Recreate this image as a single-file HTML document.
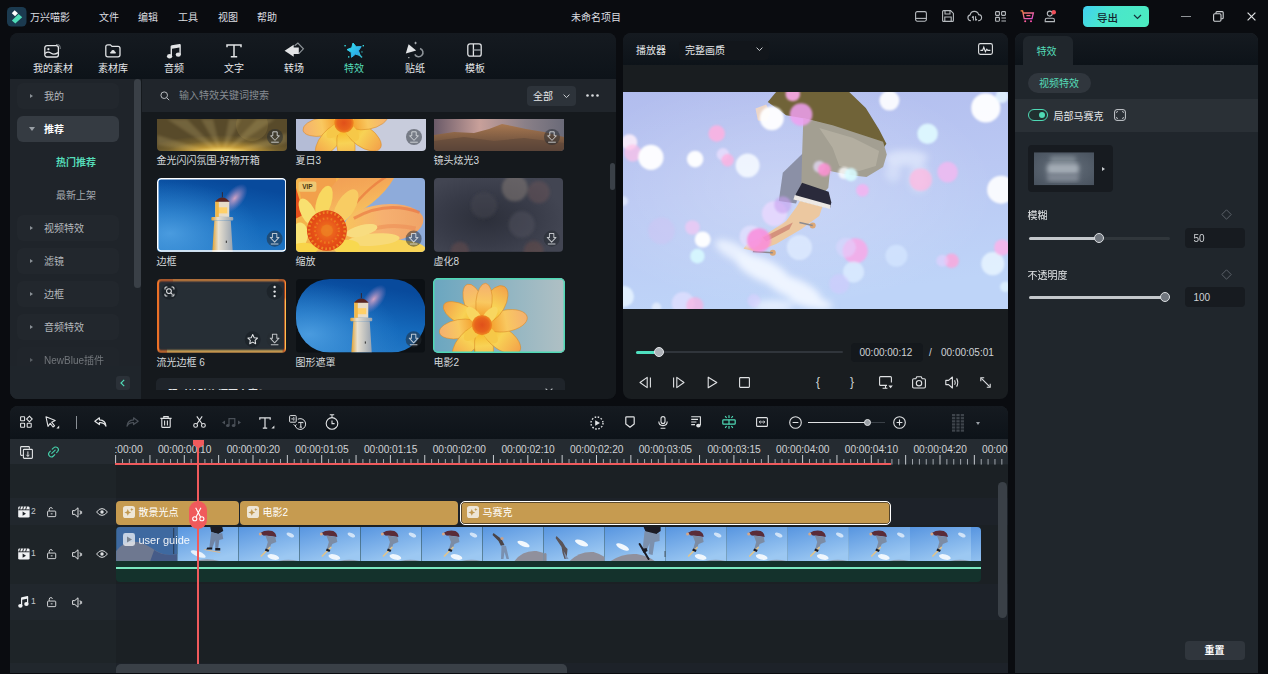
<!DOCTYPE html>
<html lang="zh-CN">
<head>
<meta charset="utf-8">
<title>万兴喵影</title>
<style>
*{box-sizing:border-box;margin:0;padding:0}
html,body{width:1268px;height:674px;overflow:hidden;background:#0a0c10;}
body{font-family:"Liberation Sans","Noto Sans CJK SC",sans-serif;font-size:10px;color:#d6d9dc;position:relative}
.abs{position:absolute}
.t{position:absolute;white-space:nowrap;line-height:14px;height:14px;margin-top:1px}
svg{position:absolute;overflow:visible}
/* ===== top bar ===== */
#topbar{position:absolute;left:0;top:0;width:1268px;height:33px;background:#0a0c10}
#topbar .t{top:9.5px;font-size:10px;color:#dcdee0}
/* ===== left panel ===== */
#lp{position:absolute;left:10px;top:33px;width:606px;height:365.5px;border-radius:8px;background:#15191d;overflow:hidden}
#lp-tabs{position:absolute;left:0;top:0;width:606px;height:46px;background:linear-gradient(#151a20,#0d1319);z-index:3}
#lp-tabs .t{top:28px;font-size:10px;color:#e4e6e8;text-align:center;width:60px}
#side{position:absolute;left:0;top:45px;width:131.300px;height:321px;background:#1f242a}
.sitem{position:absolute;left:7px;width:102px;height:26px;border-radius:6px;background:#22272d}
.sitem .t{left:27px;top:6px;font-size:10px;color:#b4b8bc}
.sitem i{position:absolute;left:13px;top:10.5px;border-left:3.5px solid #8a9096;border-top:2.5px solid transparent;border-bottom:2.5px solid transparent}
#content{position:absolute;left:132px;top:45px;width:474px;height:320px;background:#15191d}
#search{position:absolute;left:0;top:0;width:474px;height:34px;background:#20252b}
.thumb{position:absolute;border-radius:4px;overflow:hidden}
.cap{position:absolute;font-size:10px;color:#d6d9dc;white-space:nowrap;line-height:14px;margin-top:1px}
/* ===== preview ===== */
#pv{position:absolute;left:623px;top:33px;width:385px;height:365.5px;border-radius:8px;background:#191d20;overflow:hidden}
#pv-head{position:absolute;left:0;top:0;width:385px;height:32px;background:linear-gradient(#151a20,#0d1319)}
/* ===== right panel ===== */
#rp{position:absolute;left:1014.5px;top:33px;width:243.5px;height:639.6px;border-radius:8px 8px 0 0;background:#20262c;overflow:hidden}
#rp-head{position:absolute;left:0;top:0;width:244px;height:32px;background:linear-gradient(#151a20,#0d1319)}
/* ===== timeline ===== */
#tl{position:absolute;left:10px;top:406px;width:998px;height:266.6px;border-radius:8px 8px 0 0;background:#1e2428;overflow:hidden}
#tl-bar{position:absolute;left:0;top:0;width:998px;height:33px;background:linear-gradient(#151a20,#0d1319)}
.rl{top:36px;font-size:10.200px;color:#d0d3d6;letter-spacing:-.05px}
.clip{position:absolute;border-radius:4px;background:#c69b50}
</style>
</head>
<body>
<div id="topbar">
  <svg style="left:7px;top:7px" width="20" height="20" viewBox="0 0 20 20"><rect x="0" y="0" width="19.5" height="19.5" rx="4.5" fill="#1b3a4f"/><path d="M7.6 3.2 L11 6.3 L8 9.2 L4.8 6.2Z" fill="#fff"/><path d="M11.6 6.9 L15.2 10.2 L8.3 16.6 L4.9 13.4Z" fill="#4fdcb8"/></svg>
  <div class="t" style="left:30px">万兴喵影</div>
  <div class="t" style="left:99px">文件</div>
  <div class="t" style="left:138px">编辑</div>
  <div class="t" style="left:178px">工具</div>
  <div class="t" style="left:218px">视图</div>
  <div class="t" style="left:257px">帮助</div>
  <div class="t" style="left:571px">未命名项目</div>
  <!-- right icons -->
  <svg style="left:915px;top:11px" width="12" height="11" viewBox="0 0 12 11" fill="none" stroke="#b6babe" stroke-width="1.1"><rect x="0.6" y="0.6" width="10.8" height="9.6" rx="1.6"/><path d="M0.6 7.4H11.4"/></svg>
  <svg style="left:942px;top:10px" width="12" height="12" viewBox="0 0 12 12" fill="none" stroke="#b6babe" stroke-width="1.1"><path d="M0.6 1.6Q0.6 0.6 1.6 0.6H8.6L11.4 3.4V10.4Q11.4 11.4 10.4 11.4H1.6Q0.6 11.4 0.6 10.4Z"/><path d="M3 0.8V4H8V0.8M2.8 11.2V7H9.2V11.2"/></svg>
  <svg style="left:967px;top:10px" width="15" height="12" viewBox="0 0 15 12" fill="none" stroke="#b6babe" stroke-width="1.1"><path d="M4 10.8H3.6A3 3 0 0 1 3.2 4.9A4.3 4.3 0 0 1 11.6 4.6A3.1 3.1 0 0 1 11.4 10.8H11"/><path d="M6.4 6.2V10.6M5 7.6L6.4 6.2M8.6 10.6V6.2M10 9.2L8.6 10.6"/></svg>
  <svg style="left:995px;top:11px" width="12" height="11" viewBox="0 0 12 11" fill="none" stroke="#b6babe" stroke-width="1.1"><rect x="0.6" y="0.6" width="3.8" height="3.8" rx="0.6"/><rect x="6.6" y="0.6" width="3.8" height="3.8" rx="0.6"/><rect x="0.6" y="6.4" width="3.8" height="3.8" rx="0.6"/><path d="M6.4 7H11M6.4 10H11"/></svg>
  <svg style="left:1020px;top:10px" width="15" height="13" viewBox="0 0 15 13" fill="none" stroke-width="1.3"><defs><linearGradient id="cg" x1="0" y1="0" x2="1" y2="1"><stop offset="0" stop-color="#ff8a3c"/><stop offset="1" stop-color="#e050d8"/></linearGradient></defs><path d="M0.6 0.8H2.6L4.2 8.6H12L13.4 3H3.2" stroke="url(#cg)"/><path d="M6.4 5.6H10.4" stroke="#ff6a80"/><circle cx="5.2" cy="11.3" r="1" fill="#ff5fa0" stroke="none"/><circle cx="11" cy="11.3" r="1" fill="#ff4fb0" stroke="none"/></svg>
  <svg style="left:1044px;top:10px" width="13" height="13" viewBox="0 0 13 13" fill="none" stroke="#b6babe" stroke-width="1.1"><circle cx="5.8" cy="3.6" r="2.5"/><path d="M1.2 11.6V10Q1.2 8.2 3 8.2H8.6Q10.4 8.2 10.4 10V11.6Z"/><circle cx="9.8" cy="2.2" r="2.2" fill="#f0505a" stroke="none"/></svg>
  <div class="abs" style="left:1083px;top:6.400px;width:66px;height:20.200px;border-radius:4.500px;background:linear-gradient(125deg,#40d0f2 0%,#49e6cc 38%,#4cecc0 100%)"></div>
  <div class="t" style="left:1097px;top:9.500px;font-size:10.5px;color:#14242c;font-weight:500">导出</div>
  <svg style="left:1133px;top:14px" width="9" height="6" viewBox="0 0 9 6" fill="none" stroke="#15303a" stroke-width="1.2"><path d="M1 1L4.5 4.5L8 1"/></svg>
  <div class="abs" style="left:1181px;top:16px;width:10px;height:1px;background:#909498"></div>
  <svg style="left:1213px;top:11px" width="11" height="11" viewBox="0 0 11 11" fill="none" stroke="#d0d3d6" stroke-width="1.1"><rect x="0.6" y="2.8" width="7.4" height="7.4" rx="1.2"/><path d="M3 2.6V1.6Q3 0.6 4 0.6H9.2Q10.2 0.6 10.2 1.6V6.8Q10.2 7.8 9.2 7.8H8.2"/></svg>
  <svg style="left:1247px;top:12px" width="9" height="9" viewBox="0 0 9 9" fill="none" stroke="#e0e2e4" stroke-width="1.2"><path d="M0.6 0.6L8.4 8.4M8.4 0.6L0.6 8.4"/></svg>
</div>

<svg width="0" height="0" style="position:absolute"><defs>
<linearGradient id="pet" x1="0" y1="1" x2="0" y2="0"><stop offset="0" stop-color="#f7b21a"/><stop offset=".45" stop-color="#f8d255"/><stop offset="1" stop-color="#f3a24a"/></linearGradient>
<linearGradient id="pet2" x1="0" y1="1" x2="0" y2="0"><stop offset="0" stop-color="#f2941c"/><stop offset=".5" stop-color="#f9c860"/><stop offset="1" stop-color="#f4b070"/></linearGradient>
<radialGradient id="fc"><stop offset="0" stop-color="#e0501a"/><stop offset=".7" stop-color="#e8641c"/><stop offset="1" stop-color="#f08a20"/></radialGradient>
<g id="flower">
 <g stroke="#d98a28" stroke-width=".4">
 <ellipse cx="0" cy="-17" rx="7" ry="15" fill="url(#pet2)" transform="rotate(-20)"/>
 <ellipse cx="0" cy="-17" rx="7" ry="15" fill="url(#pet)" transform="rotate(-62)"/>
 <ellipse cx="0" cy="-17" rx="7" ry="15" fill="url(#pet2)" transform="rotate(-100)"/>
 <ellipse cx="0" cy="-17" rx="7" ry="15" fill="url(#pet)" transform="rotate(-140)"/>
 <ellipse cx="0" cy="-17" rx="7" ry="15" fill="url(#pet)" transform="rotate(175)"/>
 <ellipse cx="0" cy="-18" rx="8" ry="16" fill="url(#pet)" transform="rotate(125)"/>
 <ellipse cx="0" cy="-18" rx="8" ry="16" fill="url(#pet2)" transform="rotate(80)"/>
 <ellipse cx="0" cy="-18" rx="8" ry="15" fill="url(#pet)" transform="rotate(30)"/>
 <ellipse cx="0" cy="-17" rx="6" ry="14" fill="url(#pet2)" transform="rotate(5)"/>
 </g>
 <ellipse cx="0" cy="-9" rx="4" ry="8" fill="#f8d660" transform="rotate(40)"/>
 <ellipse cx="0" cy="-9" rx="4" ry="8" fill="#f8d660" transform="rotate(-40)"/>
 <ellipse cx="0" cy="-9" rx="4" ry="8" fill="#f6c848" transform="rotate(140)"/>
 <ellipse cx="0" cy="-9" rx="4" ry="8" fill="#f6c848" transform="rotate(-130)"/>
 <circle r="7.5" fill="url(#fc)"/>
</g>
<linearGradient id="sky" x1=".3" y1="0" x2="0" y2="1"><stop offset="0" stop-color="#084a9c"/><stop offset=".5" stop-color="#156abc"/><stop offset="1" stop-color="#2a80cc"/></linearGradient>
<radialGradient id="skyl" cx=".1" cy=".75" r=".7"><stop offset="0" stop-color="#58a8e8" stop-opacity=".75"/><stop offset="1" stop-color="#3a8fd6" stop-opacity="0"/></radialGradient><radialGradient id="beam" cx=".5" cy=".5" r=".5"><stop offset="0" stop-color="#f0b0c8" stop-opacity=".85"/><stop offset="1" stop-color="#c090d0" stop-opacity="0"/></radialGradient>
<linearGradient id="tower" x1="0" y1="0" x2="1" y2="0"><stop offset="0" stop-color="#e0a030"/><stop offset=".3" stop-color="#e8e0d0"/><stop offset="1" stop-color="#9aa4b0"/></linearGradient>
<g id="lh">
 <rect x="0" y="0" width="130" height="73" fill="url(#sky)"/>
 <rect x="0" y="0" width="130" height="73" fill="url(#skyl)"/>
 <ellipse cx="78" cy="20" rx="17" ry="9" fill="url(#beam)" transform="rotate(-50 78 20)"/>
 <path d="M55.500 73L57.500 42H74L76 73Z" fill="url(#tower)"/>
 <rect x="54.500" y="38.500" width="22" height="3.500" rx="1" fill="url(#tower)"/>
 <rect x="58.500" y="23" width="14" height="15.500" fill="#e8dcc8"/>
 <rect x="59.500" y="29" width="11" height="6" fill="#ffd068"/>
 <rect x="58.500" y="23" width="3.500" height="15.500" fill="#f0b848"/>
 <path d="M58 23.500Q65.500 15 73 23.500Z" fill="#5a2420"/>
 <rect x="65.100" y="14" width=".8" height="5" fill="#3a1a18"/>
 <rect x="69" y="62" width="1.200" height="2.200" fill="#444"/>
</g>
<g id="dl"><circle r="8" fill="#242a30" fill-opacity=".5"/><path d="M-2.200-5.200H2.200V-1.200H4.400L0 3.400L-4.400-1.200H-2.200Z M-3.800 5.200H3.800" fill="none" stroke="#e4e6e8" stroke-opacity=".8" stroke-width="1" stroke-linejoin="round"/></g>
</defs></svg>
<div id="lp">
  <div id="lp-tabs">
    <!-- my media -->
    <svg style="left:34px;top:11px" width="17" height="14" viewBox="0 0 17 14" fill="none" stroke="#e2e4e6" stroke-width="1.3"><rect x="0.8" y="1.6" width="13.6" height="11.4" rx="2.2"/><path d="M1 9.4C3.4 7.4 5 7.6 7.2 9.2S11 10.6 14.2 8.6"/><circle cx="4.4" cy="5.2" r="1.1" fill="#e2e4e6" stroke="none"/><path d="M12 0.5H13.4Q16.2 0.5 16.2 3.3V5" stroke="#7d8388" stroke-width="1"/></svg>
    <div class="t" style="left:13px;">我的素材</div>
    <!-- library -->
    <svg style="left:95px;top:11px" width="16" height="14" viewBox="0 0 16 14" fill="none" stroke="#e2e4e6" stroke-width="1.3"><path d="M0.8 3Q0.8 0.9 2.8 0.9H5.4L7 2.4H13Q15 2.4 15 4.4V10.8Q15 12.8 13 12.8H2.8Q0.8 12.8 0.8 10.8Z"/><path d="M5.4 9.6A1.5 1.5 0 0 1 6.2 7.4A1.9 1.9 0 0 1 9.8 7.4A1.5 1.5 0 0 1 10.6 9.6Z" fill="#e2e4e6" stroke="none"/></svg>
    <div class="t" style="left:73px;">素材库</div>
    <!-- audio -->
    <svg style="left:156px;top:11px" width="16" height="15" viewBox="0 0 16 15" fill="#e2e4e6" stroke="none"><path d="M4.6 2.6Q4.6 1.4 5.8 1.2L13.6 0.1Q14.8 0 14.8 1.2V10.6H13.4V3.6L6 4.7V12.4H4.6Z"/><ellipse cx="3.6" cy="12.3" rx="2.6" ry="2.2"/><ellipse cx="12.3" cy="10.6" rx="2.6" ry="2.2"/></svg>
    <div class="t" style="left:134px;">音频</div>
    <!-- text -->
    <svg style="left:216px;top:11px" width="16" height="14" viewBox="0 0 16 14" fill="none" stroke="#e2e4e6" stroke-width="1.5"><path d="M1 3.2V1H15V3.2M8 1V12.6M4.8 12.8H11.2"/></svg>
    <div class="t" style="left:194px;">文字</div>
    <!-- transition -->
    <svg style="left:274px;top:9px" width="20" height="16" viewBox="0 0 20 16" fill="none"><path d="M10.600 3.800L13.900 1L19.400 6.800L14.600 11.800" stroke="#8d9398" stroke-width="1.200"/><path d="M0.600 8.700L9.700 2.800V5.600H14.800V11.900H9.700V14.700Z" fill="#e2e4e6"/></svg>
    <div class="t" style="left:254px;">转场</div>
    <!-- effects -->
    <svg style="left:335px;top:10px" width="21" height="17" viewBox="0 0 21 17"><defs><linearGradient id="sg" x1="0" y1="0" x2="1" y2="1"><stop offset="0" stop-color="#34e6f0"/><stop offset="1" stop-color="#2a96e4"/></linearGradient></defs><path d="M8.0 -0.0L11.2 3.8L16.2 3.6L13.5 7.8L15.2 12.5L10.4 11.2L6.5 14.3L6.2 9.3L2.0 6.6L6.7 4.8Z" fill="url(#sg)" stroke="url(#sg)" stroke-width="1" stroke-linejoin="round"/><path d="M13 10.400L17 14.600" stroke="#36b8c8" stroke-width="1.500"/><g fill="#38d6d8"><rect x="-.6" y="2" width="1.400" height="1.400"/><rect x="17.600" y="2" width="1.400" height="1.400"/><rect x="3" y="13.200" width="1.400" height="1.400"/><rect x="16.400" y="8.400" width="1.100" height="1.100"/></g></svg>
    <div class="t" style="left:314px;color:#55dcb8">特效</div>
    <!-- sticker -->
    <svg style="left:395px;top:8px" width="19" height="18" viewBox="0 0 19 18" fill="none"><path d="M3.600 3.200L11.200 9.600L0.800 12.400Z" fill="#e2e4e6"/><path d="M15 7.400A4.300 4.300 0 1 1 9.800 13.400" stroke="#8d9398" stroke-width="1.600"/><path d="M10.600 0.200L11.050 1.550L12.400 2L11.050 2.450L10.600 3.800L10.150 2.450L8.800 2L10.150 1.550Z" fill="#b9bdc1"/><rect x="3.200" y="16" width="1.200" height="1.200" fill="#b9bdc1"/></svg>
    <div class="t" style="left:375px;">贴纸</div>
    <!-- template -->
    <svg style="left:457px;top:10px" width="15" height="14" viewBox="0 0 15 14" fill="none" stroke="#e2e4e6" stroke-width="1.3"><rect x="0.8" y="0.8" width="13.4" height="12.4" rx="2.2"/><path d="M6.4 1V13"/><path d="M6.6 7H14" stroke="#8d9398"/></svg>
    <div class="t" style="left:435px;">模板</div>
  </div>
  <div id="side">
    <div class="sitem" style="top:5px;"><i></i><div class="t">我的</div></div>
    <div class="sitem" style="top:38px;background:#353b42"><i style="left:12px;top:11px;border-left:3px solid transparent;border-right:3px solid transparent;border-top:4px solid #9aa0a6;border-bottom:0"></i><div class="t" style="color:#fff;font-weight:bold">推荐</div></div>
    <div class="sitem" style="top:137px;"><i></i><div class="t">视频特效</div></div>
    <div class="sitem" style="top:170px;"><i></i><div class="t">滤镜</div></div>
    <div class="sitem" style="top:203px;"><i></i><div class="t">边框</div></div>
    <div class="sitem" style="top:236px;"><i></i><div class="t">音频特效</div></div>
    <div class="sitem" style="top:269px; opacity:.55;"><i></i><div class="t">NewBlue插件</div></div>
    <div class="t" style="left:46px;top:77px;font-size:10px;color:#55dcb8;font-weight:bold">热门推荐</div>
    <div class="t" style="left:46px;top:110px;font-size:10px;color:#a4a9ae">最新上架</div>
        <div class="abs" style="left:0;top:288px;width:131.300px;height:33px;background:#1f252b"></div>
    <div class="abs" style="left:105.500px;top:298px;width:14px;height:13.500px;border-radius:3px;background:#2b3138"></div>
    <svg style="left:110px;top:301px" width="5" height="8" viewBox="0 0 5 8" fill="none" stroke="#4fd9b5" stroke-width="1.2"><path d="M4.2 0.8L1 4L4.2 7.2"/></svg>
    <div class="abs" style="left:124px;top:1px;width:7px;height:209px;border-radius:3.5px;background:#3a4047"></div>
  </div>
  <div id="content">
    <div id="grid" class="abs" style="left:0;top:34px;width:474px;height:278px;overflow:hidden">
      <svg class="thumb" style="left:14.5px;top:7px;border-radius:0 0 4px 4px" width="130" height="32" viewBox="0 0 130 32"><defs><radialGradient id="gr" cx=".5" cy="1.12" r=".62"><stop offset="0" stop-color="#fffbd0"/><stop offset=".2" stop-color="#ffe070"/><stop offset=".42" stop-color="#c09838"/><stop offset=".72" stop-color="#74602e"/><stop offset="1" stop-color="#584a2a"/></radialGradient><filter id="gb"><feGaussianBlur stdDeviation="1.6"/></filter></defs><rect width="130" height="32" fill="url(#gr)"/><g fill="#ffe9a0" opacity=".16" filter="url(#gb)"><path d="M65 36L10 0H30Z"/><path d="M65 36L44 0H56Z"/><path d="M65 36L72 0H84Z"/><path d="M65 36L100 0H118Z"/><path d="M65 36L0 16V26Z"/><path d="M65 36L130 14V24Z"/></g><circle cx="95" cy="6" r="16" fill="#d8b860" opacity=".14"/><use href="#dl" x="118" y="18"/></svg>
      <svg class="thumb" style="left:153.5px;top:7px;border-radius:0 0 4px 4px" width="130" height="32" viewBox="0 0 130 32"><rect width="130" height="32" fill="#c8ccdc"/><rect width="34" height="32" fill="#b4bcd6"/><path d="M43 14Q41 24 43 32" stroke="#c8a820" stroke-width="1.600" fill="none"/><use href="#flower" transform="translate(48,4) scale(1.3)"/><use href="#dl" x="118" y="18"/></svg>
      <svg class="thumb" style="left:291.5px;top:7px;border-radius:0 0 4px 4px" width="130" height="32" viewBox="0 0 130 32"><defs><linearGradient id="dusk" x1="0" y1="0" x2="1" y2="0"><stop offset="0" stop-color="#6a5a68"/><stop offset=".35" stop-color="#c8a09a"/><stop offset=".7" stop-color="#8a8088"/><stop offset="1" stop-color="#6a6a78"/></linearGradient><linearGradient id="mt" x1="0" y1="0" x2="0" y2="1"><stop offset="0" stop-color="#a87850"/><stop offset="1" stop-color="#5a4438"/></linearGradient></defs><rect width="130" height="32" fill="url(#dusk)"/><path d="M0 16L20 13L40 14L55 10L68 5L78 7L92 10L110 13L130 18V32H0Z" fill="url(#mt)"/><path d="M0 22L30 18L60 22L90 19L130 24V32H0Z" fill="#5a4438" opacity=".5"/><use href="#dl" x="118" y="18"/></svg>
      <div class="cap" style="left:14.5px;top:41.30000000000001px">金光闪闪氛围-好物开箱</div>
      <div class="cap" style="left:153.5px;top:41.30000000000001px">夏日3</div>
      <div class="cap" style="left:291.5px;top:41.30000000000001px">镜头炫光3</div>
      <svg class="thumb" style="left:14.5px;top:66px;" width="129.600" height="73.800" viewBox="0 0 130 73" preserveAspectRatio="none"><use href="#lh"/><rect x=".75" y=".75" width="128.500" height="71.500" rx="3.500" fill="none" stroke="#fff" stroke-width="1.500"/><use href="#dl" x="118" y="60"/></svg>
      <svg class="thumb" style="left:153.5px;top:66px;" width="129.600" height="73.800" viewBox="0 0 130 73" preserveAspectRatio="none"><defs><linearGradient id="zp1" x1="0" y1="1" x2="1" y2="0"><stop offset="0" stop-color="#f8cc60"/><stop offset=".5" stop-color="#f4a858"/><stop offset="1" stop-color="#ee9450"/></linearGradient><linearGradient id="zp2" x1="0" y1="0" x2="1" y2="0"><stop offset="0" stop-color="#f8c45c"/><stop offset=".5" stop-color="#f6b070"/><stop offset="1" stop-color="#f0a468"/></linearGradient><radialGradient id="zc"><stop offset="0" stop-color="#f07a1c"/><stop offset=".55" stop-color="#e8561a"/><stop offset="1" stop-color="#e04414"/></radialGradient><filter id="zb"><feGaussianBlur stdDeviation=".5"/></filter></defs><rect width="130" height="73" fill="#8eabda"/><g filter="url(#zb)"><path d="M0 0H44L42 36L70 73H0Z" fill="#f4b44c"/><ellipse cx="22" cy="6" rx="18" ry="28" transform="rotate(8 22 6)" fill="#f2a04c"/><path d="M0 10L8 36L0 40Z" fill="#e4501c"/><ellipse cx="64" cy="9" rx="46" ry="20" transform="rotate(-38 64 9)" fill="url(#zp1)"/><path d="M48 40Q70 10 92 -2" stroke="#e87038" stroke-width="2.500" fill="none" opacity=".6"/><ellipse cx="88" cy="45" rx="40" ry="19" transform="rotate(-6 88 45)" fill="url(#zp2)"/><path d="M58 40Q90 22 124 34" stroke="#e86c3c" stroke-width="3" fill="none" opacity=".55"/><path d="M70 52Q96 44 120 50" stroke="#ec8450" stroke-width="4" fill="none" opacity=".45"/><ellipse cx="84" cy="70" rx="46" ry="10" fill="#f8d458"/><ellipse cx="78" cy="61" rx="26" ry="6" transform="rotate(-4 78 61)" fill="#f8da78"/><ellipse cx="66" cy="52" rx="16" ry="5.500" transform="rotate(-14 66 52)" fill="#f8dc80"/><ellipse cx="28" cy="24" rx="7.500" ry="17" transform="rotate(18 28 24)" fill="#f8d860"/><ellipse cx="50" cy="28" rx="9" ry="19" transform="rotate(32 50 28)" fill="#f8cc64"/><ellipse cx="12" cy="34" rx="7" ry="15" transform="rotate(-28 12 34)" fill="#f8e070"/><ellipse cx="4" cy="56" rx="8" ry="12" fill="#f8e478"/><ellipse cx="8" cy="70" rx="14" ry="6" fill="#f8d448"/><ellipse cx="52" cy="68" rx="12" ry="7" fill="#f8d850"/><circle cx="31" cy="52" r="20" fill="url(#zc)"/><circle cx="31" cy="52" r="18" fill="none" stroke="#f09428" stroke-width="2.600" stroke-dasharray="1.800 2.200" opacity=".8"/><circle cx="31" cy="52" r="12" fill="none" stroke="#f08a24" stroke-width="2.200" stroke-dasharray="1.600 2.400" opacity=".7"/><circle cx="31" cy="52" r="6" fill="#ec8222" opacity=".7"/></g><rect x="2.500" y="3.500" width="18" height="10" rx="2" fill="#efc872"/><text x="11.500" y="11.300" font-family="Liberation Sans, sans-serif" font-size="6.500" font-weight="bold" fill="#4a3410" text-anchor="middle">VIP</text><use href="#dl" x="118" y="60"/></svg>
      <svg class="thumb" style="left:291.5px;top:66px;" width="129.600" height="73.800" viewBox="0 0 130 73" preserveAspectRatio="none"><defs><filter id="bl6"><feGaussianBlur stdDeviation="1.500"/></filter></defs><radialGradient id="v8" cx=".4" cy=".55" r=".6"><stop offset="0" stop-color="#2c2f3a"/><stop offset=".6" stop-color="#383b48"/><stop offset="1" stop-color="#424552"/></radialGradient><rect width="130" height="73" fill="url(#v8)"/><g filter="url(#bl6)"><circle cx="81" cy="10" r="13" fill="#8a8078" opacity=".5"/><circle cx="105" cy="14" r="11" fill="#6a5458" opacity=".5"/><circle cx="88" cy="46" r="13" fill="#5a5a64" opacity=".4"/><circle cx="50" cy="27" r="13" fill="#4a4a56" opacity=".4"/><circle cx="26" cy="72" r="9" fill="#6a4a4a" opacity=".5"/><circle cx="100" cy="72" r="10" fill="#6a4a48" opacity=".5"/></g><use href="#dl" x="118" y="60"/></svg>
      <div class="cap" style="left:14.5px;top:141.8px">边框</div>
      <div class="cap" style="left:153.5px;top:141.8px">缩放</div>
      <div class="cap" style="left:291.5px;top:141.8px">虚化8</div>
      <svg class="thumb" style="left:14.5px;top:167px;" width="129.600" height="73.500" viewBox="0 0 130 73" preserveAspectRatio="none"><defs><filter id="gl"><feGaussianBlur stdDeviation=".8"/></filter></defs><rect width="130" height="73" fill="#252d36"/><g filter="url(#gl)" fill="none"><rect x="1" y="1" width="128" height="71" rx="3" stroke="#d8481a" stroke-width="2.400"/><rect x="1" y="1" width="128" height="71" rx="3" stroke="#ff9a38" stroke-width="1"/><path d="M10 71.700H126" stroke="#ffd868" stroke-width="1.800"/><path d="M16 1.300H122" stroke="#ffb050" stroke-width="1.300"/><path d="M128.800 20V70" stroke="#ffc050" stroke-width="1.200"/></g><rect x="3" y="3.500" width="124" height="66" rx="2" fill="#252d36" filter="url(#gl)"/><circle cx="12.500" cy="12.500" r="8" fill="#1c2228" fill-opacity=".8"/><g fill="none" stroke="#e4e6e8" stroke-width="1"><circle cx="12" cy="12" r="2.400"/><path d="M13.800 13.800L15.600 15.600M8 10.400V9Q8 8 9 8H10.400M14.600 8H16Q17 8 17 9V10.400M17 14.600V16Q17 17 16 17H14.600M10.400 17H9Q8 17 8 16V14.600"/></g><circle cx="118" cy="12.500" r="8" fill="#1c2228" fill-opacity=".8"/><g fill="#e4e6e8"><circle cx="118" cy="8" r="1.200"/><circle cx="118" cy="12.500" r="1.200"/><circle cx="118" cy="17" r="1.200"/></g><circle cx="96" cy="60" r="8" fill="#1c2228" fill-opacity=".8"/><path d="M96 55.200L97.500 58.300L100.800 58.700L98.400 61L99 64.300L96 62.700L93 64.300L93.600 61L91.200 58.700L94.500 58.300Z" fill="none" stroke="#e4e6e8" stroke-width="1" stroke-linejoin="round"/><use href="#dl" x="118" y="60"/></svg>
      <svg class="thumb" style="left:153.5px;top:167px;" width="129.600" height="73.500" viewBox="0 0 130 73" preserveAspectRatio="none"><rect width="130" height="73" fill="#0c1014"/><clipPath id="cp8"><rect x="0" y="0" width="130" height="73" rx="34" ry="34"/></clipPath><g clip-path="url(#cp8)"><use href="#lh"/></g><use href="#dl" x="118" y="60"/></svg>
      <svg class="thumb" style="left:291px;top:166px;border-radius:5px" width="132" height="75" viewBox="0 0 132 75"><defs><linearGradient id="tb" x1="0" y1="0" x2="1" y2="0"><stop offset="0" stop-color="#6aa6c0"/><stop offset=".6" stop-color="#94b6c2"/><stop offset="1" stop-color="#b0c0c4"/></linearGradient></defs><rect width="132" height="75" fill="url(#tb)"/><path d="M43 60Q41 68 42 75" stroke="#b09020" stroke-width="1.600" fill="none"/><use href="#flower" transform="translate(49,47) scale(1.35)"/><rect x=".75" y=".75" width="130.500" height="73.500" rx="4" fill="none" stroke="#4fd9b5" stroke-width="1.500"/></svg>
      <div class="cap" style="left:14.5px;top:242.8px">流光边框 6</div>
      <div class="cap" style="left:153.5px;top:242.8px">图形遮罩</div>
      <div class="cap" style="left:291.5px;top:242.8px">电影2</div>
      <div class="abs" style="left:14px;top:266px;width:409px;height:20px;border-radius:5px 5px 0 0;background:#1f242a"></div>
      <div class="cap" style="left:26px;top:274.5px;font-weight:bold;color:#e4e6e8">限时补贴资源更丰富？</div>
      <svg style="left:403px;top:276px" width="8" height="5" viewBox="0 0 8 5" fill="none" stroke="#b8bcc0" stroke-width="1.100"><path d="M.6.6L4 4L7.400.6"/></svg>
    </div>
    <div id="search">
      <svg style="left:18px;top:13px" width="10" height="10" viewBox="0 0 10 10" fill="none" stroke="#b8bcc0" stroke-width="1"><circle cx="4.200" cy="4.200" r="3.300"/><path d="M6.600 6.600L9.200 9.200"/></svg>
      <div class="t" style="left:37px;top:10px;color:#868c92">输入特效关键词搜索</div>
      <div class="abs" style="left:385px;top:8px;width:49px;height:20px;border-radius:4px;background:#2d333a"></div>
      <div class="t" style="left:391px;top:10.500px;color:#e4e6e8">全部</div>
      <svg style="left:421px;top:15.500px" width="7" height="5" viewBox="0 0 7 5" fill="none" stroke="#c8ccd0" stroke-width="1"><path d="M.6.6L3.500 3.600L6.400.6"/></svg>
      <svg style="left:444px;top:16px" width="13" height="3" viewBox="0 0 13 3" fill="#d8dbde"><circle cx="1.500" cy="1.500" r="1.300"/><circle cx="6.500" cy="1.500" r="1.300"/><circle cx="11.500" cy="1.500" r="1.300"/></svg>
    </div>
    <div class="abs" style="left:468px;top:85px;width:5px;height:27px;border-radius:2.500px;background:#3a4047"></div>
  </div>
</div>

<div id="pv"><div id="pv-head">
    <div class="t" style="left:13px;top:9.800px;color:#e4e6e8">播放器</div>
    <div class="abs" style="left:56px;top:8px;width:90px;height:18.500px;border-radius:4px;background:#12161b"></div>
    <div class="t" style="left:62px;top:9.800px;color:#e4e6e8">完整画质</div>
    <svg style="left:133px;top:14px" width="7" height="5" viewBox="0 0 7 5" fill="none" stroke="#c8ccd0" stroke-width="1"><path d="M.6.6L3.500 3.600L6.400.6"/></svg>
    <svg style="left:355px;top:10px" width="15" height="12" viewBox="0 0 15 12" fill="none" stroke="#e0e2e4" stroke-width="1.100"><rect x=".6" y=".6" width="13.800" height="10.800" rx="1.800"/><path d="M2.400 7.400H4.600L5.800 4.200L7.400 8.600L8.800 6.200L9.800 7.400H12.400"/></svg>
  </div>
  <svg style="left:0;top:59px" width="385" height="217" viewBox="0 0 385 217">
<defs>
<linearGradient id="vsky" x1="0" y1="0" x2=".2" y2="1"><stop offset="0" stop-color="#b2bdee"/><stop offset=".5" stop-color="#bac8f3"/><stop offset="1" stop-color="#bed4f8"/></linearGradient>
<filter id="vb1" x="-20%" y="-20%" width="140%" height="140%"><feGaussianBlur stdDeviation="1.2"/></filter>
<filter id="vb3" x="-20%" y="-20%" width="140%" height="140%"><feGaussianBlur stdDeviation="3.5"/></filter>
<filter id="vb0"><feGaussianBlur stdDeviation=".6"/></filter>
<clipPath id="vclip"><rect width="385" height="217"/></clipPath>
</defs>
<g clip-path="url(#vclip)">
<rect width="385" height="217" fill="url(#vsky)"/><radialGradient id="vhz" cx=".42" cy=".45" r=".55"><stop offset="0" stop-color="#fff" stop-opacity=".22"/><stop offset="1" stop-color="#fff" stop-opacity="0"/></radialGradient><rect width="385" height="217" fill="url(#vhz)"/>
<!-- clouds -->
<g filter="url(#vb3)" fill="#eef4ff"><ellipse cx="112" cy="160" rx="22" ry="8" transform="rotate(28 112 160)" opacity=".85"/><ellipse cx="140" cy="178" rx="30" ry="11" transform="rotate(25 140 178)"/><ellipse cx="170" cy="196" rx="30" ry="10" transform="rotate(22 170 196)"/><ellipse cx="188" cy="210" rx="22" ry="6" transform="rotate(12 188 210)"/><ellipse cx="150" cy="214" rx="20" ry="6" opacity=".8"/><ellipse cx="283" cy="66" rx="22" ry="8" opacity=".55"/><ellipse cx="296" cy="86" rx="10" ry="14" opacity=".45"/><ellipse cx="270" cy="80" rx="8" ry="10" opacity=".4"/></g>
<!-- skater -->
<g filter="url(#vb0)">
<path d="M144.8 10.0L153.1 -0.0L226.2 -0.0L242.8 15.9L256.1 37.5L263.4 51.8L259.5 57.5L229.6 45.8L203.0 32.5L181.4 26.6L163.1 23.2Z" fill="#6f6338"/>
<path d="M180.4 60.8L159.8 80.7L155.8 109.0L173.1 111.6L179.1 92.3Z" fill="#8b90a6"/>
<path d="M180.4 25.9L209.6 33.2L260.1 49.8L263.8 62.4L260.1 75.1L243.5 85.0L226.2 83.0L207.0 79.1L205.3 95.7L196.3 106.3L178.1 103.0L179.1 62.4Z" fill="#a39f92"/>
<path d="M196.3 35.9L229.6 45.8L256.1 59.1L252.8 74.1L236.2 79.1L216.3 74.1L209.6 55.8Z" fill="#b9b5a6" opacity=".7"/>
<path d="M132.5 16.6L143.2 12.6L147.2 20.9L143.2 29.2L134.9 28.6Z" fill="#ecd6c8"/>
<path d="M178.1 107.3L193.0 105.6L200.3 112.3L196.3 123.9L178.1 137.2L153.1 152.1L133.2 159.5L120.6 156.8L123.2 152.8L143.2 142.2L163.1 128.9L173.1 115.6Z" fill="#ecc8a0"/>
<path d="M139.9 145.5L169.8 130.6L166.4 137.2L143.2 149.5Z" fill="#b85050" opacity=".45"/>
<path d="M179.1 90.7L205.6 99.7L208.3 110.6L207.0 116.3L171.1 107.3L173.1 101.6Z" fill="#2a2c3a"/>
<path d="M171.8 103.0L207.6 112.9L207.0 116.9L170.4 107.6Z" fill="#ece8e4"/>
<circle cx="189.7" cy="133.5" r="3" fill="#dca878"/><circle cx="149.8" cy="160.8" r="3" fill="#dca878"/>
<path d="M176.4 130.6L189.7 133.5" stroke="#8a8a90" stroke-width="1.500"/><path d="M129.9 159.5L149.8 160.8" stroke="#8a8a90" stroke-width="1.500"/>
</g>
<g filter="url(#vb1)"><circle cx="169.8" cy="2.0" r="7.3" fill="#fbaaea" opacity="0.9"/><circle cx="178.1" cy="22.6" r="11.3" fill="#f0a0f0" opacity="0.85"/><circle cx="148.8" cy="26.2" r="12.0" fill="#ffffff" opacity="0.95"/><circle cx="266.4" cy="8.6" r="10.0" fill="#ffffff" opacity="0.9"/><circle cx="362.8" cy="15.9" r="14.6" fill="#ffffff" opacity="0.95"/><circle cx="379.1" cy="4.3" r="6.6" fill="#e8f8ff" opacity="0.8"/><circle cx="304.6" cy="41.8" r="10.3" fill="#e0fbff" opacity="0.9"/><circle cx="93.7" cy="41.5" r="8.3" fill="#ffb0e0" opacity="0.85"/><circle cx="6.3" cy="50.2" r="8.0" fill="#fff0fa" opacity="0.85"/><circle cx="9.6" cy="60.8" r="8.6" fill="#ffc0e8" opacity="0.7"/><circle cx="27.9" cy="65.4" r="12.6" fill="#ffffff" opacity="0.95"/><circle cx="72.1" cy="67.1" r="8.3" fill="#ffffff" opacity="0.95"/><circle cx="100.0" cy="62.4" r="6.3" fill="#f0e0ff" opacity="0.7"/><circle cx="104.6" cy="68.1" r="6.3" fill="#ffb0e0" opacity="0.8"/><circle cx="124.6" cy="73.4" r="12.0" fill="#f4f8ff" opacity="0.9"/><circle cx="196.3" cy="74.7" r="6.0" fill="#e8e0ff" opacity="0.7"/><circle cx="201.3" cy="77.7" r="6.6" fill="#fa92d2" opacity="0.9"/><circle cx="221.3" cy="81.0" r="6.0" fill="#ffffff" opacity="0.8"/><circle cx="227.9" cy="82.7" r="6.6" fill="#d8fcff" opacity="0.9"/><circle cx="239.5" cy="98.3" r="6.3" fill="#f8b0f0" opacity="0.8"/><circle cx="297.7" cy="87.7" r="11.3" fill="#ffb8e0" opacity="0.75"/><circle cx="324.6" cy="80.1" r="10.3" fill="#f4b8f0" opacity="0.8"/><circle cx="378.1" cy="97.7" r="14.0" fill="#ffffff" opacity="0.9"/><circle cx="0.3" cy="109.0" r="4.7" fill="#e8f0ff" opacity="0.7"/><circle cx="151.5" cy="121.6" r="12.6" fill="#ecd8ff" opacity="0.75"/><circle cx="159.8" cy="112.9" r="8.6" fill="#c8a0f0" opacity="0.6"/><circle cx="69.4" cy="135.5" r="7.3" fill="#f4c8f4" opacity="0.7"/><circle cx="79.7" cy="147.5" r="8.0" fill="#ffffff" opacity="0.95"/><circle cx="38.5" cy="138.9" r="13.3" fill="#d8c0f4" opacity="0.35"/><circle cx="127.9" cy="144.8" r="11.3" fill="#e4e0ff" opacity="0.75"/><circle cx="135.9" cy="148.2" r="12.0" fill="#fa8cdc" opacity="0.85"/><circle cx="176.4" cy="155.5" r="12.6" fill="#e0ecff" opacity="0.75"/><circle cx="74.4" cy="164.1" r="7.3" fill="#d8fcff" opacity="0.85"/><circle cx="232.2" cy="158.8" r="12.6" fill="#f8a8e8" opacity="0.85"/><circle cx="222.9" cy="155.5" r="10.0" fill="#e0d8ff" opacity="0.5"/><circle cx="230.6" cy="180.1" r="10.6" fill="#dcecff" opacity="0.8"/><circle cx="273.4" cy="163.8" r="11.0" fill="#d4e6ff" opacity="0.75"/><circle cx="328.6" cy="168.8" r="7.3" fill="#faa8dc" opacity="0.85"/><circle cx="319.3" cy="168.8" r="6.0" fill="#e8d0ff" opacity="0.6"/><circle cx="369.8" cy="171.7" r="11.6" fill="#e8f4ff" opacity="0.85"/><circle cx="379.1" cy="155.5" r="8.0" fill="#ffb0e8" opacity="0.8"/><circle cx="216.3" cy="192.0" r="10.0" fill="#d8c8ff" opacity="0.45"/><circle cx="0.3" cy="204.6" r="10.6" fill="#e8f4ff" opacity="0.85"/><circle cx="60.1" cy="211.3" r="11.3" fill="#e4e0ff" opacity="0.7"/><circle cx="71.8" cy="213.6" r="8.6" fill="#fab0e0" opacity="0.7"/><circle cx="130.9" cy="208.6" r="6.6" fill="#e0d0ff" opacity="0.5"/><circle cx="382.4" cy="194.7" r="5.3" fill="#e0f4ff" opacity="0.8"/><circle cx="33.5" cy="215.3" r="4.7" fill="#fff" opacity="0.5"/></g>
</g>
</svg>
  <!-- progress -->
  <div class="abs" style="left:13px;top:318px;width:207px;height:2px;border-radius:1px;background:#30353b"></div>
  <div class="abs" style="left:13px;top:317.500px;width:22px;height:3px;border-radius:1.500px;background:#4fe0c0"></div>
  <div class="abs" style="left:31px;top:314px;width:10px;height:10px;border-radius:5px;background:#aeb2b8;border:1.500px solid #e4e6e8"></div>
  <div class="abs" style="left:228px;top:310px;width:72px;height:19px;border-radius:4px;background:#14181c"></div>
  <div class="t" style="left:236.500px;top:312px;font-size:10px;color:#d0d3d6">00:00:00:12</div>
  <div class="t" style="left:306px;top:312px;font-size:10px;color:#d0d3d6">/</div>
  <div class="t" style="left:318px;top:312px;font-size:10px;color:#d0d3d6">00:00:05:01</div>
  <!-- controls -->
  <svg style="left:16px;top:343px" width="13" height="13" viewBox="0 0 13 13" fill="none" stroke="#e0e2e4" stroke-width="1.100" stroke-linejoin="round"><path d="M8.200 1.400V11.600L1 6.500Z"/><path d="M11.400 1.600V11.400"/></svg>
  <svg style="left:49px;top:343px" width="13" height="13" viewBox="0 0 13 13" fill="none" stroke="#e0e2e4" stroke-width="1.100" stroke-linejoin="round"><path d="M4.800 1.400V11.600L12 6.500Z"/><path d="M1.600 1.600V11.400"/></svg>
  <svg style="left:84px;top:343px" width="11" height="13" viewBox="0 0 11 13" fill="none" stroke="#e0e2e4" stroke-width="1.100" stroke-linejoin="round"><path d="M1.200 1.200V11.800L9.800 6.500Z"/></svg>
  <svg style="left:116px;top:344px" width="11" height="11" viewBox="0 0 11 11" fill="none" stroke="#e0e2e4" stroke-width="1.100"><rect x=".6" y=".6" width="9.800" height="9.800" rx=".8"/></svg>
  <div class="t" style="left:193px;top:341px;font-size:12px;color:#d0d3d6;line-height:16px;height:16px;margin-top:-.5px">{</div>
  <div class="t" style="left:227px;top:341px;font-size:12px;color:#d0d3d6;line-height:16px;height:16px;margin-top:-.5px">}</div>
  <svg style="left:256px;top:343px" width="14" height="13" viewBox="0 0 14 13" fill="none" stroke="#e0e2e4" stroke-width="1.100"><path d="M8 9.400H1.600Q.6 9.400.6 8.400V1.600Q.6.6 1.600.6H11.400Q12.400.6 12.400 1.600V6.400"/><path d="M6.500 9.600V12M3.600 12.200H8.400"/><path d="M9.400 9.400H13.800L11.600 12.200Z" fill="#e0e2e4" stroke="none"/></svg>
  <svg style="left:289px;top:343px" width="14" height="13" viewBox="0 0 14 13" fill="none" stroke="#e0e2e4" stroke-width="1.100"><path d="M.6 4Q.6 2.800 1.800 2.800H3.800L4.800.8H9.200L10.200 2.800H12.200Q13.400 2.800 13.400 4V10.800Q13.400 12 12.200 12H1.800Q.6 12 .6 10.800Z"/><circle cx="7" cy="7.200" r="2.700"/></svg>
  <svg style="left:322px;top:343px" width="15" height="13" viewBox="0 0 15 13" fill="none" stroke="#e0e2e4" stroke-width="1.100" stroke-linejoin="round"><path d="M.8 4.400H3.600L7.400 1V12L3.600 8.600H.8Z"/><path d="M9.600 4.200Q10.800 6.500 9.600 8.800M11.600 2.400Q14 6.500 11.600 10.600"/></svg>
  <svg style="left:357px;top:344px" width="11" height="11" viewBox="0 0 11 11" fill="none" stroke="#e0e2e4" stroke-width="1.100"><path d="M1.400 1.400L9.600 9.600"/><path d="M.8 4.200V.8H4.200M10.200 6.800V10.200H6.800" /></svg>
</div>

<div id="rp"><div id="rp-head"></div>
  <div class="abs" style="left:8px;top:3.200px;width:50px;height:28.800px;border-radius:6px 6px 0 0;background:#20262c"></div>
  <div class="t" style="left:22px;top:11px;color:#55dcb8;font-size:10px">特效</div>
  <div class="abs" style="left:13px;top:40px;width:63px;height:20px;border-radius:10px;background:#30363d"></div>
  <div class="t" style="left:24.500px;top:43px;color:#55dcb8">视频特效</div>
  <div class="abs" style="left:0;top:66px;width:244px;height:33px;background:#2a3036"></div>
  <div class="abs" style="left:13px;top:76px;width:20px;height:12px;border-radius:6px;border:1.300px solid #4fd9b5;background:#21302f"></div>
  <div class="abs" style="left:24px;top:79px;width:6px;height:6px;border-radius:3px;background:#4fd9b5"></div>
  <div class="t" style="left:39px;top:75.500px;color:#e4e6e8">局部马赛克</div>
  <svg style="left:99px;top:76px" width="12" height="12" viewBox="0 0 12 12" fill="none" stroke="#c8ccd0" stroke-width="1"><rect x=".6" y=".6" width="10.800" height="10.800" rx="2.400"/><path d="M2.600 4V3.200Q2.600 2.600 3.200 2.600H4M8 2.600H8.800Q9.400 2.600 9.400 3.200V4M9.400 8V8.800Q9.400 9.400 8.800 9.400H8M4 9.400H3.200Q2.600 9.400 2.600 8.800V8" stroke-width=".9"/></svg>
  <div class="abs" style="left:13px;top:112px;width:85.500px;height:46.700px;border-radius:4px;background:#171b20"></div>
  <svg style="left:19px;top:119px" width="60" height="33.500" viewBox="0 0 60 33"><defs><filter id="mb" x="-20%" y="-20%" width="140%" height="140%"><feGaussianBlur stdDeviation="2.200"/></filter><clipPath id="mc"><rect width="60" height="33"/></clipPath><radialGradient id="mg" cx=".5" cy=".5" r=".7"><stop offset="0" stop-color="#66707c"/><stop offset="1" stop-color="#48525e"/></radialGradient></defs><g clip-path="url(#mc)"><rect width="60" height="33" fill="url(#mg)"/><rect x="16" y="4" width="26" height="7" rx="3" fill="#7c8690" filter="url(#mb)"/><rect x="13" y="11" width="32" height="11" rx="4" fill="#a2aab4" filter="url(#mb)"/><rect x="13" y="22" width="32" height="7" rx="3" fill="#828a96" filter="url(#mb)"/></g></svg>
  <div class="abs" style="left:87px;top:133.500px;border-left:3px solid #c8ccd0;border-top:2.500px solid transparent;border-bottom:2.500px solid transparent"></div>
  <!-- blur -->
  <div class="t" style="left:13px;top:175px;color:#e4e6e8">模糊</div>
  <svg style="left:206px;top:176px" width="11" height="11" viewBox="0 0 11 11" fill="none" stroke="#5a6068" stroke-width="1"><path d="M5.500.8L10.200 5.500L5.500 10.200L.8 5.500Z"/></svg>
  <div class="abs" style="left:14px;top:203.500px;width:141px;height:3px;border-radius:1.500px;background:#30363b"></div>
  <div class="abs" style="left:14px;top:203.500px;width:70px;height:3px;border-radius:1.500px;background:#c4c8cc"></div>
  <div class="abs" style="left:79px;top:200px;width:10px;height:10px;border-radius:5px;background:#70767e;border:1.500px solid #dcdfe2"></div>
  <div class="abs" style="left:170px;top:195px;width:60px;height:20px;border-radius:4px;background:#171b20"></div>
  <div class="t" style="left:179px;top:198px;color:#d0d3d6">50</div>
  <!-- opacity -->
  <div class="t" style="left:13px;top:234.500px;color:#e4e6e8">不透明度</div>
  <svg style="left:206px;top:235.500px" width="11" height="11" viewBox="0 0 11 11" fill="none" stroke="#5a6068" stroke-width="1"><path d="M5.500.8L10.200 5.500L5.500 10.200L.8 5.500Z"/></svg>
  <div class="abs" style="left:14px;top:262.600px;width:141px;height:3px;border-radius:1.500px;background:#30363b"></div>
  <div class="abs" style="left:14px;top:262.600px;width:137px;height:3px;border-radius:1.500px;background:#c4c8cc"></div>
  <div class="abs" style="left:145px;top:259px;width:10px;height:10px;border-radius:5px;background:#70767e;border:1.500px solid #dcdfe2"></div>
  <div class="abs" style="left:170px;top:254px;width:60px;height:20px;border-radius:4px;background:#171b20"></div>
  <div class="t" style="left:179px;top:257px;color:#d0d3d6">100</div>
  <!-- reset -->
  <div class="abs" style="left:170.500px;top:607.500px;width:59.500px;height:19.500px;border-radius:4px;background:#30363d"></div>
  <div class="t" style="left:190px;top:610px;color:#fff;font-weight:bold">重置</div>
</div>

<div id="tl">
  <div class="abs" style="left:0;top:33px;width:998px;height:26.300px;background:#252b31"></div>
  <div class="abs" style="left:0;top:58px;width:998px;height:34px;background:#1e2428"></div>
  <div class="abs" style="left:0;top:92px;width:998px;height:27px;background:#21272d"></div>
  <div class="abs" style="left:0;top:119px;width:998px;height:59px;background:#1e2428"></div>
  <div class="abs" style="left:0;top:178px;width:998px;height:36px;background:#21272d"></div>
  <div class="abs" style="left:0;top:214px;width:998px;height:54px;background:#1e2428"></div>
  <div class="abs" style="left:0;top:257px;width:998px;height:12px;background:#21272d"></div>
  <div class="abs" style="left:105.500px;top:59.300px;width:893px;height:210px;background:rgba(8,10,12,.13)"></div>
  <div id="tl-bar">
    <!-- grid -->
    <svg style="left:10px;top:10px" width="13" height="12" viewBox="0 0 13 12" fill="none" stroke="#e0e2e4" stroke-width="1.100"><rect x=".6" y=".8" width="4" height="4" rx=".5"/><rect x=".6" y="7.200" width="4" height="4" rx=".5"/><rect x="7.200" y="7.200" width="4" height="4" rx=".5"/><path d="M9.400.2L12.200 3L9.400 5.800L6.600 3Z"/></svg>
    <!-- cursor -->
    <svg style="left:35px;top:10px" width="15" height="13" viewBox="0 0 15 13" fill="none" stroke="#e0e2e4" stroke-width="1.100" stroke-linejoin="round"><path d="M1 .8L10.200 4.600L6.600 6.200L9.600 9.800L8 11L5.200 7.400L3 10.400Z"/><path d="M14.200 9.600V12.400H11.400Z" fill="#e0e2e4" stroke="none"/></svg>
    <div class="abs" style="left:66px;top:10px;width:1px;height:13px;background:#8a9096"></div>
    <!-- undo -->
    <svg style="left:84px;top:11px" width="13" height="10" viewBox="0 0 13 10" fill="none" stroke="#e0e2e4" stroke-width="1.200" stroke-linejoin="round"><path d="M5.400.8L.8 4.200L5.400 7.600V5.600Q10 5.200 12 9.200Q11.800 3.200 5.400 2.800Z"/></svg>
    <!-- redo -->
    <svg style="left:116px;top:11px" width="13" height="10" viewBox="0 0 13 10" fill="none" stroke="#4a5058" stroke-width="1.200" stroke-linejoin="round"><path d="M7.600.8L12.200 4.200L7.600 7.600V5.600Q3 5.200 1 9.200Q1.200 3.200 7.600 2.800Z"/></svg>
    <!-- trash -->
    <svg style="left:150px;top:10px" width="12" height="12" viewBox="0 0 12 12" fill="none" stroke="#e0e2e4" stroke-width="1.100"><path d="M.4 2.400H11.600M3.800 2.200V.6H8.200V2.200M1.800 2.600V10.400Q1.800 11.400 2.800 11.400H9.200Q10.200 11.400 10.200 10.400V2.600M4.600 4.600V9.400M7.400 4.600V9.400"/></svg>
    <!-- scissors -->
    <svg style="left:182.500px;top:10px" width="13" height="12" viewBox="0 0 13 12" fill="none" stroke="#e0e2e4" stroke-width="1.100"><circle cx="2.600" cy="9.400" r="1.900"/><circle cx="10.400" cy="9.400" r="1.900"/><path d="M3.800 8L9.200.4M9.200 8L3.800.4"/></svg>
    <!-- audio dim -->
    <svg style="left:212px;top:11px" width="19" height="11" viewBox="0 0 19 11" fill="#4a5058" stroke="none"><path d="M0 5.500L3 3.500V7.500ZM19 5.500L16 3.500V7.500Z"/><path d="M6.400 1H13.400V8.200H12.200V2.200H7.600V8.200H6.400Z"/><ellipse cx="5.800" cy="8.600" rx="1.800" ry="1.500"/><ellipse cx="11.600" cy="8.600" rx="1.800" ry="1.500"/></svg>
    <!-- T -->
    <svg style="left:248.500px;top:10.500px" width="16" height="12" viewBox="0 0 16 12" fill="none" stroke="#e0e2e4" stroke-width="1.200"><path d="M.8 2.800V.8H11.200V2.800M6 .8V11M3.800 11.200H8.200"/><path d="M15.400 8.600V11.600H12.400Z" fill="#e0e2e4" stroke="none"/></svg>
    <!-- speech to text -->
    <svg style="left:279px;top:8.500px" width="18" height="16" viewBox="0 0 18 16" fill="none" stroke="#e0e2e4" stroke-width="1"><rect x=".6" y=".6" width="6.600" height="6.600" rx=".8"/><path d="M2.200 3.900H3.400L5 2.400V5.400L3.400 3.900" stroke-width=".8"/><path d="M8.800 4.200A5.400 5.400 0 1 1 6 10.400"/><path d="M4.600 9.200L6 10.800L7.600 9.600" stroke-width=".9"/><path d="M9.600 8.200V7.400H14V8.200M11.800 7.400V12M10.600 12.200H13" stroke-width="1"/></svg>
    <!-- timer -->
    <svg style="left:314.500px;top:7.500px" width="14" height="16" viewBox="0 0 14 16" fill="none" stroke="#e0e2e4" stroke-width="1.100"><circle cx="7" cy="9.400" r="5.800"/><path d="M4.800.8H9.200M7 1V3.400M7 6.400V9.600H9.600"/></svg>
    <!-- render -->
    <svg style="left:580px;top:9.500px" width="14" height="14" viewBox="0 0 14 14" fill="none"><circle cx="7" cy="7" r="6" stroke="#e0e2e4" stroke-width="1.400" stroke-dasharray="1.600 1.540"/><path d="M5.200 4.200L10 7L5.200 9.800Z" fill="#e0e2e4"/></svg>
    <!-- marker -->
    <svg style="left:615px;top:10px" width="10" height="12" viewBox="0 0 10 12" fill="none" stroke="#e0e2e4" stroke-width="1.200" stroke-linejoin="round"><path d="M.8 1.600Q.8.800 1.600.800H8.400Q9.200.800 9.200 1.600V8L5 11.200L.8 8Z"/></svg>
    <!-- mic -->
    <svg style="left:648px;top:10px" width="10" height="13" viewBox="0 0 10 13" fill="none" stroke="#e0e2e4" stroke-width="1.100"><rect x="3" y=".6" width="4" height="7" rx="2"/><path d="M.8 5.600Q.8 9.600 5 9.600Q9.200 9.600 9.200 5.600M2.600 12.200H7.400"/></svg>
    <!-- music list -->
    <svg style="left:681px;top:10px" width="11" height="12" viewBox="0 0 11 12" fill="none" stroke="#e0e2e4" stroke-width="1.100"><path d="M.2.800H9.800M.2 3.400H7M.2 6H5.400M.2 8.600H4M9.400.8V9"/><ellipse cx="7.400" cy="9.600" rx="2.200" ry="1.900" fill="#e0e2e4" stroke="none"/></svg>
    <!-- snap -->
    <svg style="left:712px;top:9px" width="14" height="14" viewBox="0 0 14 14" fill="none" stroke="#4fd9b5" stroke-width="1.200"><rect x=".8" y="4.800" width="12.400" height="4.400" rx=".8"/><path d="M7 4.800V9.200M7 .2V3M7 11V13.800M3.200 1.200L4.600 3M10.800 1.200L9.400 3M3.200 12.800L4.600 11M10.800 12.800L9.400 11"/></svg>
    <!-- fit -->
    <svg style="left:746px;top:11px" width="12" height="10" viewBox="0 0 12 10" fill="none" stroke="#e0e2e4" stroke-width="1.100"><rect x=".6" y=".6" width="10.800" height="8.800" rx="1"/><path d="M3.400 5H8.600M4.600 3.600L3.200 5L4.600 6.400M7.400 3.600L8.800 5L7.400 6.400" stroke-width=".9"/></svg>
    <!-- zoom -->
    <svg style="left:778.500px;top:10px" width="13" height="13" viewBox="0 0 13 13" fill="none" stroke="#e0e2e4" stroke-width="1.100"><circle cx="6.500" cy="6.500" r="5.800"/><path d="M3.600 6.500H9.400"/></svg>
    <div class="abs" style="left:798px;top:16px;width:77px;height:1px;background:#3a4047"></div>
    <div class="abs" style="left:798px;top:15.500px;width:58px;height:1.500px;background:#e0e2e4"></div>
    <div class="abs" style="left:853.500px;top:13px;width:7px;height:7px;border-radius:3.500px;background:#9aa0a6;border:1px solid #e0e2e4"></div>
    <svg style="left:882.500px;top:10px" width="13" height="13" viewBox="0 0 13 13" fill="none" stroke="#e0e2e4" stroke-width="1.100"><circle cx="6.500" cy="6.500" r="5.800"/><path d="M3.600 6.500H9.400M6.500 3.600V9.400"/></svg>
    <!-- meter -->
    <svg style="left:942px;top:8px" width="12" height="18" viewBox="0 0 12 18" fill="#3e444b"><g id="mcol"><rect x="0" y="0" width="3.200" height="2.200"/><rect x="0" y="3.100" width="3.200" height="2.200"/><rect x="0" y="6.200" width="3.200" height="2.200"/><rect x="0" y="9.300" width="3.200" height="2.200"/><rect x="0" y="12.400" width="3.200" height="2.200"/><rect x="0" y="15.500" width="3.200" height="2.200"/></g><use href="#mcol" x="4.400"/><use href="#mcol" x="8.800"/></svg>
    <div class="abs" style="left:965.500px;top:15.500px;border-top:3px solid #9aa0a6;border-left:2.500px solid transparent;border-right:2.500px solid transparent"></div>
  </div>
  <!-- second row icons -->
  <svg style="left:10px;top:40px" width="13" height="13" viewBox="0 0 13 13" fill="none" stroke="#e0e2e4" stroke-width="1.100"><path d="M2.800 9.400H1.400Q.6 9.400.6 8.600V1.400Q.6.600 1.400.600H8.600Q9.400.600 9.400 1.400V2.800"/><rect x="3.400" y="3.400" width="9" height="9" rx=".8"/><path d="M7.900 5.400V10.400M6.400 8.800L7.900 10.400L9.400 8.800" stroke-width="1"/></svg>
  <svg style="left:36.500px;top:40px" width="13" height="12" viewBox="0 0 13 12" fill="none" stroke="#45d0aa" stroke-width="1.100" stroke-linecap="round"><path d="M5.200 3.200L6.600 1.800A2.700 2.700 0 0 1 10.600 5.600L9.600 6.600M7.800 8.600L6.400 10A2.700 2.700 0 0 1 2.400 6.200L3.400 5.200M4.800 7.400L8.200 4.200"/></svg>
  <!-- ruler -->
  <div id="ruler" class="abs" style="left:105px;top:33px;width:893px;height:26px;overflow:hidden">
    <div style="position:absolute;left:-105px;top:-33px;width:998px;height:60px"><div class="t rl" style="left:79.3px">00:00:00:00</div><div class="t rl" style="left:148.0px">00:00:00:10</div><div class="t rl" style="left:216.7px">00:00:00:20</div><div class="t rl" style="left:285.3px">00:00:01:05</div><div class="t rl" style="left:354.0px">00:00:01:15</div><div class="t rl" style="left:422.7px">00:00:02:00</div><div class="t rl" style="left:491.4px">00:00:02:10</div><div class="t rl" style="left:560.1px">00:00:02:20</div><div class="t rl" style="left:628.7px">00:00:03:05</div><div class="t rl" style="left:697.4px">00:00:03:15</div><div class="t rl" style="left:766.1px">00:00:04:00</div><div class="t rl" style="left:834.8px">00:00:04:10</div><div class="t rl" style="left:903.5px">00:00:04:20</div><div class="t rl" style="left:972.1px">00:00:05:05</div></div>
  </div>
  <svg style="left:0;top:0" width="998" height="60" viewBox="0 0 998 60" fill="none"><path d="M105.60 49V58.6M139.95 49V58.6M174.30 49V58.6M208.65 49V58.6M243.00 49V58.6M277.35 49V58.6M311.70 49V58.6M346.05 49V58.6M380.40 49V58.6M414.75 49V58.6M449.10 49V58.6M483.45 49V58.6M517.80 49V58.6M552.15 49V58.6M586.50 49V58.6M620.85 49V58.6M655.20 49V58.6M689.55 49V58.6M723.90 49V58.6M758.25 49V58.6M792.60 49V58.6M826.95 49V58.6M861.30 49V58.6M895.65 49V58.6M930.00 49V58.6M964.35 49V58.6" stroke="#c8ccd0" stroke-width="1"/><path d="M112.47 53V58.6M119.34 53V58.6M126.21 53V58.6M133.08 53V58.6M146.82 53V58.6M153.69 53V58.6M160.56 53V58.6M167.43 53V58.6M181.17 53V58.6M188.04 53V58.6M194.91 53V58.6M201.78 53V58.6M215.52 53V58.6M222.39 53V58.6M229.26 53V58.6M236.13 53V58.6M249.87 53V58.6M256.74 53V58.6M263.61 53V58.6M270.48 53V58.6M284.22 53V58.6M291.09 53V58.6M297.96 53V58.6M304.83 53V58.6M318.57 53V58.6M325.44 53V58.6M332.31 53V58.6M339.18 53V58.6M352.92 53V58.6M359.79 53V58.6M366.66 53V58.6M373.53 53V58.6M387.27 53V58.6M394.14 53V58.6M401.01 53V58.6M407.88 53V58.6M421.62 53V58.6M428.49 53V58.6M435.36 53V58.6M442.23 53V58.6M455.97 53V58.6M462.84 53V58.6M469.71 53V58.6M476.58 53V58.6M490.32 53V58.6M497.19 53V58.6M504.06 53V58.6M510.93 53V58.6M524.67 53V58.6M531.54 53V58.6M538.41 53V58.6M545.28 53V58.6M559.02 53V58.6M565.89 53V58.6M572.76 53V58.6M579.63 53V58.6M593.37 53V58.6M600.24 53V58.6M607.11 53V58.6M613.98 53V58.6M627.72 53V58.6M634.59 53V58.6M641.46 53V58.6M648.33 53V58.6M662.07 53V58.6M668.94 53V58.6M675.81 53V58.6M682.68 53V58.6M696.42 53V58.6M703.29 53V58.6M710.16 53V58.6M717.03 53V58.6M730.77 53V58.6M737.64 53V58.6M744.51 53V58.6M751.38 53V58.6M765.12 53V58.6M771.99 53V58.6M778.86 53V58.6M785.73 53V58.6M799.47 53V58.6M806.34 53V58.6M813.21 53V58.6M820.08 53V58.6M833.82 53V58.6M840.69 53V58.6M847.56 53V58.6M854.43 53V58.6M868.17 53V58.6M875.04 53V58.6M881.91 53V58.6M888.78 53V58.6M902.52 53V58.6M909.39 53V58.6M916.26 53V58.6M923.13 53V58.6M936.87 53V58.6M943.74 53V58.6M950.61 53V58.6M957.48 53V58.6M971.22 53V58.6M978.09 53V58.6M984.96 53V58.6M991.83 53V58.6" stroke="#a0a6ac" stroke-width="1"/></svg>
  <div class="abs" style="left:105px;top:57.400px;width:776px;height:1.600px;background:#f05a5c"></div>
  <!-- track headers -->
  <!-- track 2 -->
  <svg style="left:7.500px;top:100px" width="12" height="12" viewBox="0 0 12 12"><rect x=".2" y=".4" width="11.400" height="11.200" rx="1.400" fill="#f0f2f4"/><path d="M.2 3.800H11.600" stroke="#1d2227" stroke-width=".9"/><path d="M2.600.4L1.600 3.800M5.600.4L4.600 3.800M8.600.4L7.600 3.800" stroke="#1d2227" stroke-width="1"/><path d="M4.600 5.600L8 7.700L4.600 9.800Z" fill="#1d2227"/></svg>
  <div class="t" style="left:21px;top:96.500px;font-size:8.500px;color:#c4c8cc">2</div>
  <svg style="left:7.500px;top:142px" width="12" height="12" viewBox="0 0 12 12"><rect x=".2" y=".4" width="11.400" height="11.200" rx="1.400" fill="#f0f2f4"/><path d="M.2 3.800H11.600" stroke="#1d2227" stroke-width=".9"/><path d="M2.600.4L1.600 3.800M5.600.4L4.600 3.800M8.600.4L7.600 3.800" stroke="#1d2227" stroke-width="1"/><path d="M4.600 5.600L8 7.700L4.600 9.800Z" fill="#1d2227"/></svg>
  <div class="t" style="left:21px;top:138.500px;font-size:8.500px;color:#c4c8cc">1</div>
  <svg style="left:8px;top:190px" width="11" height="12" viewBox="0 0 11 12" fill="#f0f2f4"><path d="M3 2.200Q3 1.400 3.800 1.200L9.400.1Q10.200 0 10.200.8V8H9V2.800L4.200 3.700V9.800H3Z"/><ellipse cx="2.400" cy="9.800" rx="2.200" ry="1.900"/><ellipse cx="8.400" cy="8" rx="2.200" ry="1.900"/></svg>
  <div class="t" style="left:21px;top:186.500px;font-size:8.500px;color:#c4c8cc">1</div>
  <!-- lock / speaker / eye icons -->
  <svg style="left:36.800px;top:100.8px" width="9.300" height="10.200" viewBox="0 0 10 11" fill="none" stroke="#e0e2e4" stroke-width="1"><rect x=".6" y="4.400" width="8.800" height="6" rx=".8"/><path d="M2.400 4.200V2.600Q2.400 .6 4.200 .6Q5.600 .6 5.800 2"/><path d="M4 7.400H6"/></svg>
  <svg style="left:62px;top:100.5px" width="11" height="11" viewBox="0 0 11 11" fill="none" stroke="#e0e2e4" stroke-width="1" stroke-linejoin="round"><path d="M.6 3.600H2.800L6 .8V10.200L2.800 7.400H.6Z"/><path d="M8 3.400Q9 5.500 8 7.600" /><path d="M9.600 4.200V6.800" stroke-width=".9"/></svg>
  <svg style="left:86px;top:102px" width="12" height="8" viewBox="0 0 12 8" fill="none" stroke="#e0e2e4" stroke-width="1"><path d="M.6 4Q3 .6 6 .6Q9 .6 11.400 4Q9 7.400 6 7.400Q3 7.400 .6 4Z"/><circle cx="6" cy="4" r="1.700" fill="#e0e2e4" stroke="none"/></svg>
  <svg style="left:36.800px;top:142.8px" width="9.300" height="10.200" viewBox="0 0 10 11" fill="none" stroke="#e0e2e4" stroke-width="1"><rect x=".6" y="4.400" width="8.800" height="6" rx=".8"/><path d="M2.400 4.200V2.600Q2.400 .6 4.200 .6Q5.600 .6 5.800 2"/><path d="M4 7.400H6"/></svg>
  <svg style="left:62px;top:142.5px" width="11" height="11" viewBox="0 0 11 11" fill="none" stroke="#e0e2e4" stroke-width="1" stroke-linejoin="round"><path d="M.6 3.600H2.800L6 .8V10.200L2.800 7.400H.6Z"/><path d="M8 3.400Q9 5.500 8 7.600" /><path d="M9.600 4.200V6.800" stroke-width=".9"/></svg>
  <svg style="left:86px;top:144px" width="12" height="8" viewBox="0 0 12 8" fill="none" stroke="#e0e2e4" stroke-width="1"><path d="M.6 4Q3 .6 6 .6Q9 .6 11.400 4Q9 7.400 6 7.400Q3 7.400 .6 4Z"/><circle cx="6" cy="4" r="1.700" fill="#e0e2e4" stroke="none"/></svg>
  <svg style="left:36.800px;top:190.8px" width="9.300" height="10.200" viewBox="0 0 10 11" fill="none" stroke="#e0e2e4" stroke-width="1"><rect x=".6" y="4.400" width="8.800" height="6" rx=".8"/><path d="M2.400 4.200V2.600Q2.400 .6 4.200 .6Q5.600 .6 5.800 2"/><path d="M4 7.400H6"/></svg>
  <svg style="left:62px;top:190.5px" width="11" height="11" viewBox="0 0 11 11" fill="none" stroke="#e0e2e4" stroke-width="1" stroke-linejoin="round"><path d="M.6 3.600H2.800L6 .8V10.200L2.800 7.400H.6Z"/><path d="M8 3.400Q9 5.500 8 7.600" /><path d="M9.600 4.200V6.800" stroke-width=".9"/></svg>
  <!-- effect clips -->
  <div class="clip" style="left:106px;top:94.5px;width:123px;height:24px"></div>
  <div class="clip" style="left:230px;top:94.5px;width:218px;height:24px"></div>
  <div class="clip" style="left:449.5px;top:94.5px;width:431.500px;height:24px;border:1.500px solid #fff;border-radius:5px;box-shadow:inset 0 0 0 .8px #3a3020"></div>
  <svg style="left:113px;top:100px" width="12" height="12" viewBox="0 0 12 12"><rect width="12" height="12" rx="2.600" fill="#f4f0e8" fill-opacity=".88"/><path d="M4.800 3L5.800 5.400L8.200 6.400L5.800 7.400L4.800 9.800L3.800 7.400L1.400 6.400L3.800 5.400Z" fill="#c09850"/><path d="M8.800 1.800L9.300 3L10.500 3.500L9.300 4L8.800 5.200L8.300 4L7.100 3.500L8.300 3Z" fill="#c09850"/></svg><div class="t" style="left:128.5px;top:99px;color:#fff;font-size:10px">散景光点</div>
  <svg style="left:237px;top:100px" width="12" height="12" viewBox="0 0 12 12"><rect width="12" height="12" rx="2.600" fill="#f4f0e8" fill-opacity=".88"/><path d="M4.800 3L5.800 5.400L8.200 6.400L5.800 7.400L4.800 9.800L3.800 7.400L1.400 6.400L3.800 5.400Z" fill="#c09850"/><path d="M8.800 1.800L9.300 3L10.500 3.500L9.300 4L8.800 5.200L8.300 4L7.100 3.500L8.300 3Z" fill="#c09850"/></svg><div class="t" style="left:252.5px;top:99px;color:#fff;font-size:10px">电影2</div>
  <svg style="left:457px;top:100px" width="12" height="12" viewBox="0 0 12 12"><rect width="12" height="12" rx="2.600" fill="#f4f0e8" fill-opacity=".88"/><path d="M4.800 3L5.800 5.400L8.200 6.400L5.800 7.400L4.800 9.800L3.800 7.400L1.400 6.400L3.800 5.400Z" fill="#c09850"/><path d="M8.800 1.800L9.300 3L10.500 3.500L9.300 4L8.800 5.200L8.300 4L7.100 3.500L8.300 3Z" fill="#c09850"/></svg><div class="t" style="left:472.5px;top:99px;color:#fff;font-size:10px">马赛克</div>
  <!-- video clip -->
  <div class="abs" style="left:106px;top:121px;width:865px;height:54.500px;border-radius:4px;background:#14322c;overflow:hidden">
    <svg style="left:0;top:0" width="865" height="34" viewBox="0 0 865 34"><defs><linearGradient id="fsky" x1="0" y1="0" x2=".5" y2="1"><stop offset="0" stop-color="#5795e0"/><stop offset="1" stop-color="#9cc8f2"/></linearGradient></defs><g transform="translate(0.20,0)"><svg x="0" y="0" width="61.2" height="34" viewBox="0 0 61.2 34" style="position:static;overflow:hidden"><rect width="61.2" height="34" fill="#4f86cc"/><path d="M0 34V24Q8 13 22 15Q30 17 40 24Q50 30 61.2 27V34Z" fill="#959cb4"/><path d="M38 23Q48 30 61.2 27V34H34Z" fill="#5a72a8"/><rect width="61.2" height="34" fill="#1c2c44" opacity=".32"/><path d="M57.500 1V27" stroke="#1a1a1a" stroke-width=".6"/></svg></g><g transform="translate(61.25,0)"><svg x="0" y="0" width="61.2" height="34" viewBox="0 0 61.2 34" style="position:static;overflow:hidden"><rect width="61.2" height="34" fill="url(#fsky)"/><ellipse cx="21" cy="27" rx="8" ry="2.600" fill="#fff" opacity=".8" transform="rotate(22 21 27)"/><path d="M18 34Q30 30.500 42 34Z" fill="#9098a8"/><path d="M33 0H45L46 4L41 7L34 5Z" fill="#1c1c24"/><path d="M34 5L41 7L45 6L46 12L42 13L41 21L38 21L38 13L35 21L32 21Z" fill="#7084a4"/><path d="M27 22.500L43 25.500" stroke="#d8b890" stroke-width="1.200"/><path d="M30 20.500H35L35 22.500H29Z M38 21H43V23.500H38Z" fill="#1c1c24"/></svg></g><g transform="translate(122.30,0)"><svg x="0" y="0" width="61.2" height="34" viewBox="0 0 61.2 34" style="position:static;overflow:hidden"><rect width="61.2" height="34" fill="url(#fsky)"/><ellipse cx="52" cy="8" rx="4" ry="1.800" fill="#fff" opacity=".65" transform="rotate(25 52 8)"/><ellipse cx="35" cy="30" rx="6" ry="2.600" fill="#fff" opacity=".85" transform="rotate(15 35 30)"/><path d="M40 34Q50 31.500 60 34Z" fill="#8c94a4" opacity=".8"/><path d="M22 6Q27 2.500 34 4Q38 6 38 10L32 9L25 8.500Z" fill="#5a2c38"/><circle cx="22" cy="7" r="1.500" fill="#d8a888"/><path d="M27 8.500L37 10L38 15L33 17L30.500 23L27.500 22L29.500 15Z" fill="#7c8ca4"/><path d="M23 29L31.500 20.500" stroke="#e0c48c" stroke-width="1.700" stroke-linecap="round"/><path d="M27.500 21.500L31 23L30 25L26.500 23.500Z" fill="#1c1c24"/></svg></g><g transform="translate(183.35,0)"><svg x="0" y="0" width="61.2" height="34" viewBox="0 0 61.2 34" style="position:static;overflow:hidden"><rect width="61.2" height="34" fill="url(#fsky)"/><ellipse cx="52" cy="8" rx="4" ry="1.800" fill="#fff" opacity=".65" transform="rotate(25 52 8)"/><ellipse cx="35" cy="30" rx="6" ry="2.600" fill="#fff" opacity=".85" transform="rotate(15 35 30)"/><path d="M40 34Q50 31.500 60 34Z" fill="#8c94a4" opacity=".8"/><path d="M22 6Q27 2.500 34 4Q38 6 38 10L32 9L25 8.500Z" fill="#5a2c38"/><circle cx="22" cy="7" r="1.500" fill="#d8a888"/><path d="M27 8.500L37 10L38 15L33 17L30.500 23L27.500 22L29.500 15Z" fill="#7c8ca4"/><path d="M23 29L31.500 20.500" stroke="#e0c48c" stroke-width="1.700" stroke-linecap="round"/><path d="M27.500 21.500L31 23L30 25L26.500 23.500Z" fill="#1c1c24"/></svg></g><g transform="translate(244.40,0)"><svg x="0" y="0" width="61.2" height="34" viewBox="0 0 61.2 34" style="position:static;overflow:hidden"><rect width="61.2" height="34" fill="url(#fsky)"/><ellipse cx="52" cy="8" rx="4" ry="1.800" fill="#fff" opacity=".65" transform="rotate(25 52 8)"/><ellipse cx="35" cy="30" rx="6" ry="2.600" fill="#fff" opacity=".85" transform="rotate(15 35 30)"/><path d="M40 34Q50 31.500 60 34Z" fill="#8c94a4" opacity=".8"/><path d="M22 6Q27 2.500 34 4Q38 6 38 10L32 9L25 8.500Z" fill="#5a2c38"/><circle cx="22" cy="7" r="1.500" fill="#d8a888"/><path d="M27 8.500L37 10L38 15L33 17L30.500 23L27.500 22L29.500 15Z" fill="#7c8ca4"/><path d="M23 29L31.500 20.500" stroke="#e0c48c" stroke-width="1.700" stroke-linecap="round"/><path d="M27.500 21.500L31 23L30 25L26.500 23.500Z" fill="#1c1c24"/></svg></g><g transform="translate(305.45,0)"><svg x="0" y="0" width="61.2" height="34" viewBox="0 0 61.2 34" style="position:static;overflow:hidden"><rect width="61.2" height="34" fill="url(#fsky)"/><ellipse cx="52" cy="8" rx="4" ry="1.800" fill="#fff" opacity=".65" transform="rotate(25 52 8)"/><ellipse cx="35" cy="30" rx="6" ry="2.600" fill="#fff" opacity=".85" transform="rotate(15 35 30)"/><path d="M40 34Q50 31.500 60 34Z" fill="#8c94a4" opacity=".8"/><path d="M22 6Q27 2.500 34 4Q38 6 38 10L32 9L25 8.500Z" fill="#5a2c38"/><circle cx="22" cy="7" r="1.500" fill="#d8a888"/><path d="M27 8.500L37 10L38 15L33 17L30.500 23L27.500 22L29.500 15Z" fill="#7c8ca4"/><path d="M23 29L31.500 20.500" stroke="#e0c48c" stroke-width="1.700" stroke-linecap="round"/><path d="M27.500 21.500L31 23L30 25L26.500 23.500Z" fill="#1c1c24"/></svg></g><g transform="translate(366.50,0)"><svg x="0" y="0" width="61.2" height="34" viewBox="0 0 61.2 34" style="position:static;overflow:hidden"><rect width="61.2" height="34" fill="url(#fsky)"/><ellipse cx="41" cy="17" rx="6.500" ry="2.400" fill="#fff" opacity=".9" transform="rotate(22 41 17)"/><path d="M32 34Q40 23 54 24L61.2 26V34Z" fill="#90909c"/><path d="M11 6L19 12L22 18L18.500 19L16 14L10 8Z" fill="#4a4448"/><circle cx="19.500" cy="11.500" r="1.600" fill="#c8a088"/><path d="M19 18L23.500 19L26.500 32H24L22 25L21 32H18.500Z" fill="#7a90b0"/></svg></g><g transform="translate(427.55,0)"><svg x="0" y="0" width="61.2" height="34" viewBox="0 0 61.2 34" style="position:static;overflow:hidden"><rect width="61.2" height="34" fill="url(#fsky)"/><ellipse cx="38" cy="16" rx="7" ry="2.600" fill="#fff" opacity=".9" transform="rotate(22 38 16)"/><path d="M26 34Q36 24 50 25Q57 27 61.2 30V34Z" fill="#90909c"/><path d="M13 9L19 15L22 20L24 22L23 32H21L19 26L18 20L12 11Z" fill="#5a5458"/><path d="M20 24L25 32H22Z" fill="#7a90b0"/><path d="M0 27Q2 25 3 27V34H0Z" fill="#8a8c98"/></svg></g><g transform="translate(488.60,0)"><svg x="0" y="0" width="61.2" height="34" viewBox="0 0 61.2 34" style="position:static;overflow:hidden"><rect width="61.2" height="34" fill="url(#fsky)"/><ellipse cx="18" cy="20" rx="7" ry="2.500" fill="#fff" opacity=".9" transform="rotate(25 18 20)"/><path d="M6 34Q18 26 32 27Q44 29 50 34Z" fill="#90909c"/><path d="M39 0H56V4L52 7H42Z" fill="#1c1c24"/><path d="M40 4L52 7L55 6L55 14L50 15L48 28L44 27L45 16L42 24L38 22Z" fill="#7c90ac"/><path d="M35 17L44 32" stroke="#1c1c24" stroke-width="2" stroke-linecap="round"/><path d="M37 22L42 21L43 24L39 26Z" fill="#1c1c24"/><path d="M60.500 24V30" stroke="#222" stroke-width=".8"/></svg></g><g transform="translate(549.65,0)"><svg x="0" y="0" width="61.2" height="34" viewBox="0 0 61.2 34" style="position:static;overflow:hidden"><rect width="61.2" height="34" fill="url(#fsky)"/><ellipse cx="52" cy="8" rx="4" ry="1.800" fill="#fff" opacity=".65" transform="rotate(25 52 8)"/><ellipse cx="35" cy="30" rx="6" ry="2.600" fill="#fff" opacity=".85" transform="rotate(15 35 30)"/><path d="M40 34Q50 31.500 60 34Z" fill="#8c94a4" opacity=".8"/><path d="M22 6Q27 2.500 34 4Q38 6 38 10L32 9L25 8.500Z" fill="#5a2c38"/><circle cx="22" cy="7" r="1.500" fill="#d8a888"/><path d="M27 8.500L37 10L38 15L33 17L30.500 23L27.500 22L29.500 15Z" fill="#7c8ca4"/><path d="M23 29L31.500 20.500" stroke="#e0c48c" stroke-width="1.700" stroke-linecap="round"/><path d="M27.500 21.500L31 23L30 25L26.500 23.500Z" fill="#1c1c24"/></svg></g><g transform="translate(610.70,0)"><svg x="0" y="0" width="61.2" height="34" viewBox="0 0 61.2 34" style="position:static;overflow:hidden"><rect width="61.2" height="34" fill="url(#fsky)"/><ellipse cx="52" cy="8" rx="4" ry="1.800" fill="#fff" opacity=".65" transform="rotate(25 52 8)"/><ellipse cx="35" cy="30" rx="6" ry="2.600" fill="#fff" opacity=".85" transform="rotate(15 35 30)"/><path d="M40 34Q50 31.500 60 34Z" fill="#8c94a4" opacity=".8"/><path d="M22 6Q27 2.500 34 4Q38 6 38 10L32 9L25 8.500Z" fill="#5a2c38"/><circle cx="22" cy="7" r="1.500" fill="#d8a888"/><path d="M27 8.500L37 10L38 15L33 17L30.500 23L27.500 22L29.500 15Z" fill="#7c8ca4"/><path d="M23 29L31.500 20.500" stroke="#e0c48c" stroke-width="1.700" stroke-linecap="round"/><path d="M27.500 21.500L31 23L30 25L26.500 23.500Z" fill="#1c1c24"/></svg></g><g transform="translate(671.75,0)"><svg x="0" y="0" width="61.2" height="34" viewBox="0 0 61.2 34" style="position:static;overflow:hidden"><rect width="61.2" height="34" fill="url(#fsky)"/><ellipse cx="52" cy="8" rx="4" ry="1.800" fill="#fff" opacity=".65" transform="rotate(25 52 8)"/><ellipse cx="35" cy="30" rx="6" ry="2.600" fill="#fff" opacity=".85" transform="rotate(15 35 30)"/><path d="M40 34Q50 31.500 60 34Z" fill="#8c94a4" opacity=".8"/><path d="M22 6Q27 2.500 34 4Q38 6 38 10L32 9L25 8.500Z" fill="#5a2c38"/><circle cx="22" cy="7" r="1.500" fill="#d8a888"/><path d="M27 8.500L37 10L38 15L33 17L30.500 23L27.500 22L29.500 15Z" fill="#7c8ca4"/><path d="M23 29L31.500 20.500" stroke="#e0c48c" stroke-width="1.700" stroke-linecap="round"/><path d="M27.500 21.500L31 23L30 25L26.500 23.500Z" fill="#1c1c24"/></svg></g><g transform="translate(732.80,0)"><svg x="0" y="0" width="61.2" height="34" viewBox="0 0 61.2 34" style="position:static;overflow:hidden"><rect width="61.2" height="34" fill="url(#fsky)"/><ellipse cx="52" cy="8" rx="4" ry="1.800" fill="#fff" opacity=".65" transform="rotate(25 52 8)"/><ellipse cx="35" cy="30" rx="6" ry="2.600" fill="#fff" opacity=".85" transform="rotate(15 35 30)"/><path d="M40 34Q50 31.500 60 34Z" fill="#8c94a4" opacity=".8"/><path d="M22 6Q27 2.500 34 4Q38 6 38 10L32 9L25 8.500Z" fill="#5a2c38"/><circle cx="22" cy="7" r="1.500" fill="#d8a888"/><path d="M27 8.500L37 10L38 15L33 17L30.500 23L27.500 22L29.500 15Z" fill="#7c8ca4"/><path d="M23 29L31.500 20.500" stroke="#e0c48c" stroke-width="1.700" stroke-linecap="round"/><path d="M27.500 21.500L31 23L30 25L26.500 23.500Z" fill="#1c1c24"/></svg></g><g transform="translate(793.85,0)"><svg x="0" y="0" width="61.2" height="34" viewBox="0 0 61.2 34" style="position:static;overflow:hidden"><rect width="61.2" height="34" fill="url(#fsky)"/><ellipse cx="52" cy="8" rx="4" ry="1.800" fill="#fff" opacity=".65" transform="rotate(25 52 8)"/><ellipse cx="35" cy="30" rx="6" ry="2.600" fill="#fff" opacity=".85" transform="rotate(15 35 30)"/><path d="M40 34Q50 31.500 60 34Z" fill="#8c94a4" opacity=".8"/><path d="M22 6Q27 2.500 34 4Q38 6 38 10L32 9L25 8.500Z" fill="#5a2c38"/><circle cx="22" cy="7" r="1.500" fill="#d8a888"/><path d="M27 8.500L37 10L38 15L33 17L30.500 23L27.500 22L29.500 15Z" fill="#7c8ca4"/><path d="M23 29L31.500 20.500" stroke="#e0c48c" stroke-width="1.700" stroke-linecap="round"/><path d="M27.500 21.500L31 23L30 25L26.500 23.500Z" fill="#1c1c24"/></svg></g><g transform="translate(854.90,0)"><svg x="0" y="0" width="61.2" height="34" viewBox="0 0 61.2 34" style="position:static;overflow:hidden"><rect width="61.2" height="34" fill="url(#fsky)"/><ellipse cx="52" cy="8" rx="4" ry="1.800" fill="#fff" opacity=".65" transform="rotate(25 52 8)"/><ellipse cx="35" cy="30" rx="6" ry="2.600" fill="#fff" opacity=".85" transform="rotate(15 35 30)"/><path d="M40 34Q50 31.500 60 34Z" fill="#8c94a4" opacity=".8"/><path d="M22 6Q27 2.500 34 4Q38 6 38 10L32 9L25 8.500Z" fill="#5a2c38"/><circle cx="22" cy="7" r="1.500" fill="#d8a888"/><path d="M27 8.500L37 10L38 15L33 17L30.500 23L27.500 22L29.500 15Z" fill="#7c8ca4"/><path d="M23 29L31.500 20.500" stroke="#e0c48c" stroke-width="1.700" stroke-linecap="round"/><path d="M27.500 21.500L31 23L30 25L26.500 23.500Z" fill="#1c1c24"/></svg></g></svg>
    <div class="abs" style="left:0;top:40px;width:865px;height:2px;background:#7be8c0"></div>
  </div>
  <svg style="left:113px;top:127px" width="12" height="13" viewBox="0 0 12 13"><rect width="12" height="13" rx="2.400" fill="#fff" fill-opacity=".7"/><path d="M4 3.400L9 6.500L4 9.600Z" fill="#7a8490"/></svg>
  <div class="t" style="left:128.5px;top:126px;color:#fff;font-size:11px;opacity:.92">user guide</div>
  <!-- playhead -->
  <div class="abs" style="left:187.3px;top:34px;width:1.600px;height:234px;background:#f05a5c"></div>
  <svg style="left:182.5px;top:33.5px" width="11" height="8" viewBox="0 0 11 8"><path d="M0 0H11V4.600L7 7.400H4L0 4.600Z" fill="#f05a5c"/></svg>
  <div class="abs" style="left:179px;top:95px;width:18px;height:28px;border-radius:9px;background:#f05a5c"></div>
  <svg style="left:181.600px;top:100.600px" width="12.600" height="15" viewBox="0 0 11 13" fill="none" stroke="#fff" stroke-width=".95"><circle cx="2.400" cy="10.200" r="1.800"/><circle cx="8.600" cy="10.200" r="1.800"/><path d="M3.400 8.800L7.800.6M7.600 8.800L3.200.6"/></svg>
  <!-- scrollbars -->
  <div class="abs" style="left:106px;top:257.5px;width:451px;height:10.500px;border-radius:5px 5px 0 0;background:#3a4047"></div>
  <div class="abs" style="left:988px;top:76px;width:9px;height:136px;border-radius:4.500px;background:#3a4047"></div>
</div>
</body>
</html>
